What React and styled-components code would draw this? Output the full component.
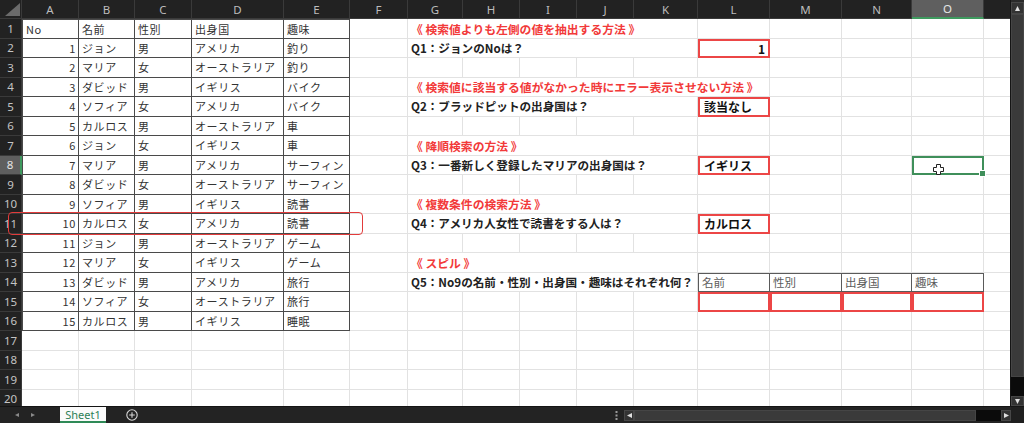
import React from 'react';
import styled, { createGlobalStyle, css } from 'styled-components';

const GlobalStyle = createGlobalStyle`
  html, body {
    margin: 0;
    padding: 0;
    background: #1f1f1f;
  }
  body {
    font-family: "Noto Sans CJK JP", "Noto Sans", sans-serif;
  }
`;

const COLS = ['A', 'B', 'C', 'D', 'E', 'F', 'G', 'H', 'I', 'J', 'K', 'L', 'M', 'N', 'O', 'P'];
const WIDTHS = [57, 56, 57, 92, 66, 58, 55, 57, 57, 57, 64, 72, 72, 70, 72, 72];
const ROW_COUNT = 20;
const ACTIVE_COL = 'O';
const ACTIVE_ROW = 8;

const people = [
  [1, 'ジョン', '男', 'アメリカ', '釣り'],
  [2, 'マリア', '女', 'オーストラリア', '釣り'],
  [3, 'ダビッド', '男', 'イギリス', 'バイク'],
  [4, 'ソフィア', '女', 'アメリカ', 'バイク'],
  [5, 'カルロス', '男', 'オーストラリア', '車'],
  [6, 'ジョン', '女', 'イギリス', '車'],
  [7, 'マリア', '男', 'アメリカ', 'サーフィン'],
  [8, 'ダビッド', '女', 'オーストラリア', 'サーフィン'],
  [9, 'ソフィア', '男', 'イギリス', '読書'],
  [10, 'カルロス', '女', 'アメリカ', '読書'],
  [11, 'ジョン', '男', 'オーストラリア', 'ゲーム'],
  [12, 'マリア', '女', 'イギリス', 'ゲーム'],
  [13, 'ダビッド', '男', 'アメリカ', '旅行'],
  [14, 'ソフィア', '女', 'オーストラリア', '旅行'],
  [15, 'カルロス', '男', 'イギリス', '睡眠'],
];

// build the cell map: "B3" -> { text, kind, align, span, ... }
const cells = {};
['No', '名前', '性別', '出身国', '趣味'].forEach((t, i) => {
  cells[COLS[i] + 1] = { text: t, kind: 'table', top: true, left: i === 0 };
});
people.forEach((p, r) => {
  p.forEach((v, i) => {
    cells[COLS[i] + (r + 2)] = {
      text: v,
      kind: 'table',
      left: i === 0,
      align: i === 0 ? 'right' : 'left',
    };
  });
});

const questions = [
  { row: 1, heading: '《 検索値よりも左側の値を抽出する方法 》', span: 5 },
  { row: 2, q: 'Q1：ジョンのNoは？', answer: '1', align: 'right' },
  { row: 4, heading: '《 検索値に該当する値がなかった時にエラー表示させない方法 》', span: 6 },
  { row: 5, q: 'Q2：ブラッドピットの出身国は？', answer: '該当なし' },
  { row: 7, heading: '《 降順検索の方法 》', span: 5 },
  { row: 8, q: 'Q3：一番新しく登録したマリアの出身国は？', answer: 'イギリス' },
  { row: 10, heading: '《 複数条件の検索方法 》', span: 5 },
  { row: 11, q: 'Q4：アメリカ人女性で読書をする人は？', answer: 'カルロス' },
  { row: 13, heading: '《 スピル 》', span: 5 },
  { row: 14, q: 'Q5：No9の名前・性別・出身国・趣味はそれぞれ何？' },
];
questions.forEach((item) => {
  if (item.heading) {
    cells['G' + item.row] = { text: item.heading, kind: 'heading', span: item.span };
  } else {
    cells['G' + item.row] = { text: item.q, kind: 'question', span: 5 };
    if (item.answer) {
      cells['L' + item.row] = { text: item.answer, kind: 'answer', align: item.align };
    }
  }
});
['名前', '性別', '出身国', '趣味'].forEach((t, i) => {
  cells[COLS[11 + i] + 14] = { text: t, kind: 'spillHead', first: i === 0 };
  cells[COLS[11 + i] + 15] = { text: '', kind: 'spillBox' };
});
cells[ACTIVE_COL + ACTIVE_ROW] = { text: '', kind: 'active' };

const Window = styled.div`
  width: 1024px;
  height: 423px;
  display: flex;
  flex-direction: column;
  overflow: hidden;
  background: #1f1f1f;
`;

const Workspace = styled.div`
  display: flex;
  height: 406px;
`;

const Sheet = styled.div`
  position: relative;
  display: grid;
  grid-template-columns: 22px ${WIDTHS.map((w) => w + 'px').join(' ')};
  grid-template-rows: 19px repeat(${ROW_COUNT}, 19.5px);
  width: 1010px;
  height: 406px;
  overflow: hidden;
  background: #ffffff;
`;

const CornerHead = styled.div`
  background: #222222;
  border-right: 1px solid #3a3a3a;
  border-bottom: 1px solid #3a3a3a;
  box-sizing: border-box;
  display: flex;
  align-items: flex-end;
  justify-content: flex-end;
  padding: 0 1px 2px 0;
`;

const ColHead = styled.div`
  box-sizing: border-box;
  display: flex;
  align-items: center;
  justify-content: center;
  background: ${(p) => (p.$active ? '#5f5f5f' : '#222222')};
  color: ${(p) => (p.$active ? '#e6e6e6' : '#bdbdbd')};
  border-right: 1px solid #3a3a3a;
  border-bottom: ${(p) => (p.$active ? '2px solid #3f9a5f' : '1px solid #3a3a3a')};
  font-family: "Noto Sans", "Liberation Sans", sans-serif;
  font-size: 11.5px;
`;

const RowHead = styled.div`
  box-sizing: border-box;
  display: flex;
  align-items: center;
  justify-content: center;
  background: ${(p) => (p.$active ? '#5f5f5f' : '#222222')};
  color: ${(p) => (p.$active ? '#e6e6e6' : '#c4c4c4')};
  border-bottom: 1px solid #3a3a3a;
  border-right: ${(p) => (p.$active ? '2px solid #3f9a5f' : '1px solid #3a3a3a')};
  font-family: "Noto Sans", "Liberation Sans", sans-serif;
  font-size: 11.5px;
`;

const kinds = {
  table: css`
    border-right-color: #4a4a4a;
    border-bottom-color: #4a4a4a;
    color: #333333;
    letter-spacing: 0.6px;
    ${(p) => p.$top && 'border-top: 1px solid #4a4a4a;'}
    ${(p) => p.$left && 'border-left: 1px solid #4a4a4a;'}
  `,
  heading: css`
    color: #f23a3a;
    font-weight: 700;
    font-size: 11.8px;
  `,
  question: css`
    color: #222222;
    font-weight: 700;
    font-size: 11.6px;
  `,
  answer: css`
    border: 2px solid #ec4646;
    color: #111111;
    font-weight: 700;
    font-size: 12px;
    padding: 0 3px 0 4px;
  `,
  spillHead: css`
    border: 1px solid #5a5a5a;
    border-left: none;
    color: #5c5c5c;
    font-size: 11.5px;
    ${(p) => p.$first && 'border-left: 1px solid #5a5a5a;'}
  `,
  spillBox: css`
    border: 2px solid #ec4646;
  `,
  active: css`
    position: relative;
    border: 2px solid #3f8f5a;
    &::after {
      content: '';
      position: absolute;
      right: -4px;
      bottom: -4px;
      width: 5px;
      height: 5px;
      background: #3f8f5a;
      border: 1px solid #ffffff;
    }
  `,
};

const Cell = styled.div`
  box-sizing: border-box;
  grid-column: span ${(p) => p.$span || 1};
  display: flex;
  align-items: center;
  justify-content: ${(p) => (p.$align === 'right' ? 'flex-end' : 'flex-start')};
  padding: 0 2px 0 3px;
  min-width: 0;
  white-space: nowrap;
  border-right: 1px solid #e2e2e2;
  border-bottom: 1px solid #e2e2e2;
  font-size: 11px;
  color: #333333;
  ${(p) => p.$kind && kinds[p.$kind]}
`;

const RowMark = styled.div`
  position: absolute;
  left: 8px;
  top: 212px;
  width: 355px;
  height: 23px;
  box-sizing: border-box;
  border: 1.5px solid #e23b3b;
  border-radius: 4px;
  pointer-events: none;
`;

const Pointer = styled.svg`
  position: absolute;
  left: 933px;
  top: 164px;
`;

const VScroll = styled.div`
  width: 14px;
  display: flex;
  flex-direction: column;
  box-sizing: border-box;
  background: #2a2a2a;
  border-left: 1px solid #151515;
  padding-top: 2px;
`;

const ScrollBtn = styled.div`
  display: flex;
  align-items: center;
  justify-content: center;
  flex: 0 0 auto;
  width: ${(p) => p.$w || 'auto'};
  height: ${(p) => p.$h || 'auto'};
  background: #333333;
  border: 1px solid #474747;
  box-sizing: border-box;
`;

const Thumb = styled.div`
  flex: 0 0 ${(p) => p.$size}px;
  background: #3a3a3a;
  box-sizing: border-box;
  border: 1px solid #454545;
`;

const TrackRest = styled.div`
  flex: 1;
  background: #0b0b0b;
`;

const TabBar = styled.div`
  display: flex;
  align-items: center;
  height: 17px;
  background: #232323;
  border-top: 1px solid #141414;
  box-sizing: border-box;
`;

const NavGroup = styled.div`
  display: flex;
  align-items: center;
  gap: 12px;
  width: 60px;
  padding-left: 15px;
  box-sizing: border-box;
`;

const SheetTab = styled.div`
  width: 46px;
  height: 16px;
  align-self: flex-start;
  display: flex;
  align-items: center;
  justify-content: center;
  box-sizing: border-box;
  background: #fbfbfb;
  border-bottom: 2px solid #2f8a57;
  color: #2d7f57;
  font-family: "Noto Sans", "Liberation Sans", sans-serif;
  font-size: 11px;
`;

const AddSheet = styled.svg`
  margin-left: 20px;
`;

const Spacer = styled.div`
  flex: 1;
`;

const Dots = styled.svg`
  margin-right: 6px;
`;

const HScroll = styled.div`
  display: flex;
  width: 387px;
  height: 11px;
`;

const CornerBox = styled.div`
  width: 13px;
  height: 100%;
  background: #1f1f1f;
`;

const Arrow = ({ dir, size = 4, color = '#e0e0e0' }) => {
  const pts = {
    up: `0,${size} ${size},${size} ${size / 2},0`,
    down: `0,0 ${size},0 ${size / 2},${size}`,
    left: `${size},0 ${size},${size} 0,${size / 2}`,
    right: `0,0 0,${size} ${size},${size / 2}`,
  }[dir];
  return (
    <svg width={size} height={size} viewBox={`0 0 ${size} ${size}`}>
      <polygon points={pts} fill={color} />
    </svg>
  );
};

const renderRow = (r) => {
  const out = [
    <RowHead key={'h' + r} $active={r === ACTIVE_ROW}>
      {r}
    </RowHead>,
  ];
  let c = 0;
  while (c < COLS.length) {
    const key = COLS[c] + r;
    const v = cells[key] || {};
    const span = v.span || 1;
    out.push(
      <Cell
        key={key}
        $span={span}
        $kind={v.kind}
        $align={v.align}
        $top={v.top}
        $left={v.left}
        $first={v.first}
      >
        {v.text}
      </Cell>
    );
    c += span;
  }
  return <React.Fragment key={'r' + r}>{out}</React.Fragment>;
};

export default function App() {
  return (
    <Window>
      <GlobalStyle />
      <Workspace>
        <Sheet>
          <CornerHead>
            <svg width="15" height="13" viewBox="0 0 15 13">
              <polygon points="15,0 15,13 0,13" fill="#6b6b6b" />
            </svg>
          </CornerHead>
          {COLS.map((c) => (
            <ColHead key={c} $active={c === ACTIVE_COL}>
              {/* column P is hidden behind the scroll bar */}
              {c === 'P' ? '' : c}
            </ColHead>
          ))}
          {Array.from({ length: ROW_COUNT }, (_, i) => renderRow(i + 1))}
          <RowMark />
          <Pointer width="11" height="11" viewBox="0 0 11 11">
            <path
              d="M3.5 0.5h4v3h3v4h-3v3h-4v-3h-3v-4h3z"
              fill="#ffffff"
              stroke="#222222"
              strokeWidth="1"
            />
          </Pointer>
        </Sheet>
        <VScroll>
          <ScrollBtn $h="12px">
            <Arrow dir="up" size={5} />
          </ScrollBtn>
          <Thumb $size={363} />
          <TrackRest />
          <ScrollBtn $h="10px">
            <Arrow dir="down" size={5} />
          </ScrollBtn>
        </VScroll>
      </Workspace>
      <TabBar>
        <NavGroup>
          <Arrow dir="left" size={4} color="#8a8a8a" />
          <Arrow dir="right" size={4} color="#8a8a8a" />
        </NavGroup>
        <SheetTab>Sheet1</SheetTab>
        <AddSheet width="12" height="12" viewBox="0 0 12 12">
          <circle cx="6" cy="6" r="5.2" fill="none" stroke="#d8d8d8" strokeWidth="1.1" />
          <path d="M6 3.2v5.6M3.2 6h5.6" stroke="#d8d8d8" strokeWidth="1.1" />
        </AddSheet>
        <Spacer />
        <Dots width="3" height="9" viewBox="0 0 3 9">
          <rect x="0.5" y="0" width="2" height="2" fill="#9a9a9a" />
          <rect x="0.5" y="3.5" width="2" height="2" fill="#9a9a9a" />
          <rect x="0.5" y="7" width="2" height="2" fill="#9a9a9a" />
        </Dots>
        <HScroll>
          <ScrollBtn $w="10px">
            <Arrow dir="left" size={5} />
          </ScrollBtn>
          <Thumb $size={342} />
          <TrackRest />
          <ScrollBtn $w="10px">
            <Arrow dir="right" size={5} />
          </ScrollBtn>
        </HScroll>
        <CornerBox />
      </TabBar>
    </Window>
  );
}
